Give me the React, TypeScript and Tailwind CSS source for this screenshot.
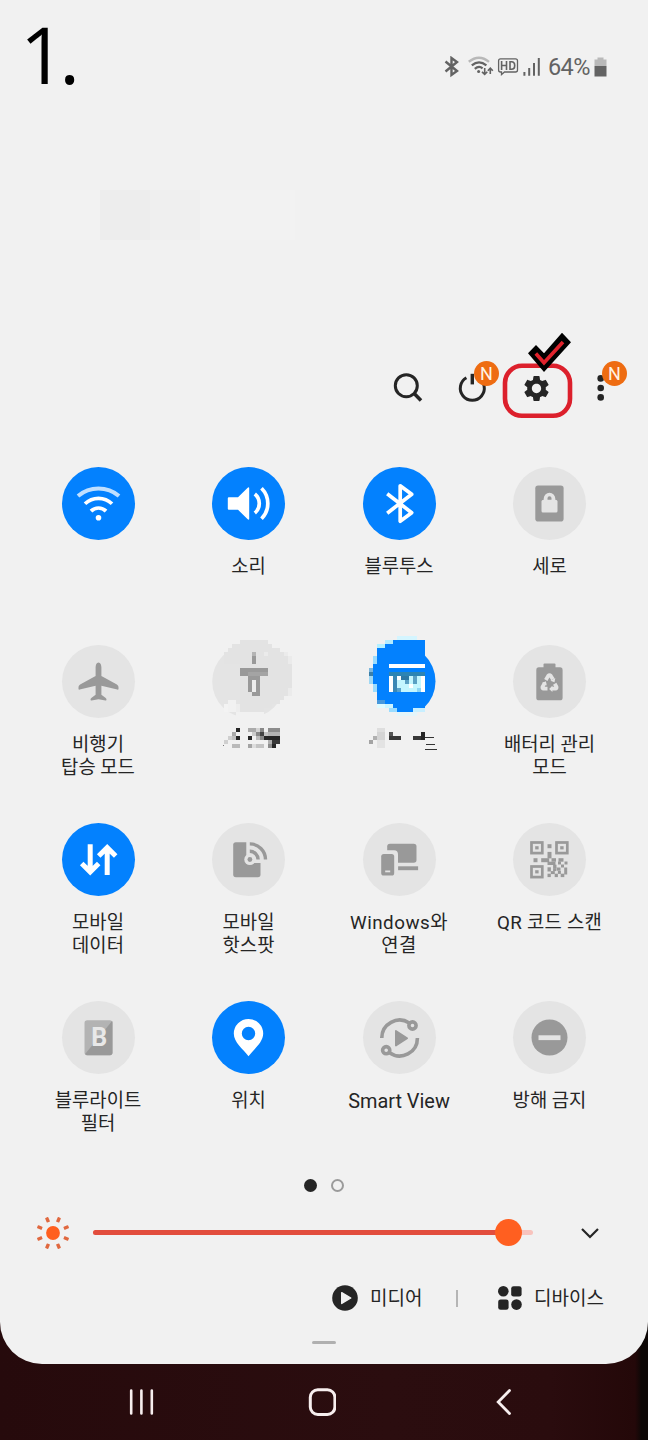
import type { ReactNode } from 'react';
import { MdSettings } from 'react-icons/md';

type Px = [x: number, y: number, w: number, h: number, fill: string];

/* Blocks of the pixelated areas */
const flashlightPixels: Px[] = [
  [240, 640, 28, 4, '#e3e3e3'],
  [232, 644, 40, 4, '#e3e3e3'],
  [228, 648, 52, 4, '#e3e3e3'],
  [224, 652, 60, 4, '#e3e3e3'],
  [224, 656, 64, 8, '#e3e3e3'],
  [240, 664, 52, 24, '#e3e3e3'],
  [240, 688, 48, 8, '#e3e3e3'],
  [240, 696, 44, 4, '#e3e3e3'],
  [240, 700, 40, 4, '#e3e3e3'],
  [240, 704, 32, 4, '#e3e3e3'],
  [240, 708, 24, 4, '#e3e3e3'],
  [228, 700, 8, 12, '#f1f1f1'],
  [224, 704, 4, 8, '#f3f3f3'],
  [236, 704, 4, 8, '#ededed'],
  [236, 712, 28, 6, '#f1f1f1'],
  [284, 652, 4, 4, '#ebebeb'],
  [288, 656, 4, 8, '#ebebeb'],
  [288, 688, 4, 8, '#ebebeb'],
  [252, 652, 4, 4, '#b4b4b4'],
  [252, 656, 4, 8, '#999999'],
  [264, 652, 4, 4, '#ebebeb'],
  [240, 668, 28, 4, '#999999'],
  [240, 672, 8, 4, '#999999'],
  [248, 672, 20, 4, '#a4a4a4'],
  [248, 676, 4, 16, '#999999'],
  [252, 676, 4, 4, '#999999'],
  [252, 680, 4, 12, '#ededed'],
  [256, 676, 4, 20, '#999999'],
  [252, 692, 4, 4, '#999999'],
  // label
  [236, 728, 4, 4, '#262626'],
  [248, 728, 8, 4, '#ababab'],
  [256, 728, 4, 4, '#d4d4d4'],
  [260, 728, 4, 4, '#888888'],
  [268, 728, 12, 4, '#8c8c8c'],
  [232, 732, 4, 4, '#aaaaaa'],
  [252, 732, 4, 4, '#cccccc'],
  [256, 732, 4, 4, '#888888'],
  [260, 732, 4, 4, '#444444'],
  [264, 732, 4, 4, '#c4c4c4'],
  [268, 732, 12, 4, '#b4b4b4'],
  [228, 736, 4, 4, '#cfcfcf'],
  [232, 736, 4, 4, '#c0c0c0'],
  [236, 736, 4, 4, '#262626'],
  [248, 736, 4, 4, '#262626'],
  [256, 736, 4, 4, '#bbbbbb'],
  [260, 736, 4, 4, '#888888'],
  [264, 736, 16, 4, '#262626'],
  [224, 740, 4, 4, '#cfcfcf'],
  [268, 740, 4, 4, '#b0b0b0'],
  [272, 740, 8, 4, '#383838'],
  [223, 745, 1, 1, '#777777'],
  [232, 744, 8, 4, '#bababa'],
  [248, 744, 4, 4, '#a4a4a4'],
  [252, 744, 4, 4, '#dddddd'],
  [256, 744, 8, 4, '#c4c4c4'],
  [268, 744, 4, 4, '#8c8c8c'],
  [272, 744, 4, 4, '#262626'],
];

const calendarPixels: Px[] = [
  [396, 636, 20, 4, '#d4f5ff'],
  [384, 640, 8, 4, '#b4ecff'],
  [392, 640, 32, 4, '#0381fe'],
  [376, 644, 8, 4, '#b4f0ff'],
  [384, 644, 40, 4, '#0381fe'],
  [376, 648, 48, 8, '#0381fe'],
  [372, 656, 4, 8, '#9adcff'],
  [376, 656, 48, 8, '#0381fe'],
  [372, 664, 52, 28, '#0381fe'],
  [368, 668, 4, 4, '#7cb6dc'],
  [368, 672, 4, 4, '#3c7fa8'],
  [368, 676, 4, 8, '#a0d8f4'],
  [372, 684, 4, 8, '#9adcff'],
  [376, 692, 48, 8, '#0381fe'],
  [376, 700, 8, 4, '#4798dc'],
  [384, 700, 40, 4, '#0381fe'],
  [376, 704, 8, 4, '#e0fbff'],
  [384, 704, 8, 4, '#cdf5ff'],
  [392, 704, 32, 4, '#0381fe'],
  [388, 708, 8, 4, '#9adcff'],
  [396, 708, 16, 4, '#0381fe'],
  [412, 708, 12, 4, '#c8efff'],
  [396, 712, 20, 4, '#e4f5fa'],
  [388, 664, 36, 4, '#ffffff'],
  [388, 672, 36, 4, '#2c84b4'],
  [388, 676, 4, 16, '#ffffff'],
  [392, 676, 4, 16, '#3a87b4'],
  [396, 676, 28, 16, '#c4f6ff'],
  [396, 676, 4, 4, '#ffffff'],
  [400, 676, 8, 4, '#2d78a4'],
  [404, 680, 4, 4, '#5aa0c4'],
  [412, 676, 4, 8, '#5aa0c4'],
  [420, 676, 4, 16, '#ffffff'],
  [396, 688, 4, 4, '#58a2cc'],
  [408, 684, 4, 4, '#ffffff'],
  [416, 688, 4, 4, '#8ed6f4'],
  // label
  [376, 728, 8, 4, '#dedede'],
  [376, 732, 8, 8, '#d4d4d4'],
  [376, 740, 8, 8, '#e3e3e3'],
  [372, 736, 4, 4, '#b0b0b0'],
  [368, 740, 4, 4, '#a4a4a4'],
  [388, 732, 4, 4, '#555555'],
  [388, 736, 12, 4, '#383838'],
  [412, 736, 8, 4, '#383838'],
  [420, 732, 4, 8, '#262626'],
  [424, 737, 9, 1, '#333333'],
  [425, 744, 9, 1, '#333333'],
  [424, 749, 12, 1, '#333333'],
];

function Pixels({ data }: { data: Px[] }) {
  return (
    <g shapeRendering="crispEdges">
      {data.map(([x, y, w, h, fill], i) => (
        <rect key={i} x={x} y={y} width={w} height={h} fill={fill} />
      ))}
    </g>
  );
}

const stroke = { fill: 'none', stroke: '#fff', strokeWidth: 3.7 };

const WifiTile = (
  <g {...stroke}>
    <path d="M-20.5 -7.5A31.8 31.8 0 0 1 20.5 -7.5" opacity=".75" strokeWidth="4" />
    <path d="M-13.5 .3A19.3 19.3 0 0 1 13.5 .3" />
    <path d="M-7.5 7.6A10.6 10.6 0 0 1 7.5 7.6" />
    <circle cy="14.2" r="2.8" fill="#fff" stroke="none" />
  </g>
);

const SoundTile = (
  <g>
    <path d="M-19.7 -6.3H-10.5L-.8 -15.8Q.7 -17 .7 -15.3V15.3Q.7 17 -.8 15.8L-10.5 6.3H-19.7Q-20.7 6.3 -20.7 5.3V-5.3Q-20.7 -6.3 -19.7 -6.3Z" fill="#fff" />
    <path d="M6.3 -9.5A12.3 12.3 0 0 1 6.3 9.5M13 -15.3A21.7 21.7 0 0 1 13 15.3" {...stroke} />
  </g>
);

const BluetoothTile = (
  <path d="M-12.3 -9.7L12.2 9.2L.7 17.7V-17.7L12.2 -9.2L-12.3 9.7" {...stroke} strokeLinejoin="round" />
);

const PortraitTile = (
  <g>
    <rect x="-14.2" y="-18" width="28.3" height="36" rx="2.8" fill="#999" />
    <path d="M-5.8 -3.7V-5A5.8 5.8 0 0 1 5.8 -5V-3.7Q8 -3.7 8 -2.2V7.5Q8 9 6.5 9H-6.5Q-8 9 -8 7.5V-2.2Q-8 -3.7 -5.8 -3.7ZM-2 -3.7H2V-5.2A2 2 0 0 0 -2 -5.2Z" fill="#e4e4e4" />
  </g>
);

const PlaneTile = (
  <path
    d="M0 -19C2 -19 2.9 -16.5 2.9 -14V-5.6L18.4 3Q20 4 20 5.6V7.3Q20 8.4 18.8 8.1L2.9 4.2V13.2L7.2 16.6Q8 17.3 8 18.3Q8 19.2 7 19L0 17.8L-7 19Q-8 19.2 -8 18.3Q-8 17.3 -7.2 16.6L-2.9 13.2V4.2L-18.8 8.1Q-20 8.4 -20 7.3V5.6Q-20 4 -18.4 3L-2.9 -5.6V-14C-2.9 -16.5 -2 -19 0 -19Z"
    fill="#999"
  />
);

const BatteryTile = (
  <g>
    <rect x="-13.2" y="-14.2" width="26.3" height="33" rx="2.6" fill="#999" />
    <rect x="-6" y="-18" width="12" height="6" rx="1" fill="#999" />
    <g fill="none" stroke="#e4e4e4" strokeWidth="3.8" strokeLinejoin="round">
      <path d="M-3.7 -1.5L-1.3 -5.6Q0 -7 1.3 -5.6L3.4 -2.2" />
      <path d="M-4.7 1.4L-7 5.4Q-7.4 7.1 -5.8 7.2H-2" />
      <path d="M2 7.2H5.8Q7.4 7.1 7 5.4L5.2 2.2" />
    </g>
    <path d="M5.8 -3.6L5 .7L.9 -.8ZM-7.6 1.6L-3.6 -.2L-2.8 4ZM2.9 4.2V10.4L-.4 7.4Z" fill="#e4e4e4" />
  </g>
);

const DataTile = (
  <g fill="none" stroke="#fff" strokeWidth="5">
    <path d="M-8.3 -15.3V12.5M-16.8 4L-8.3 12.4L.2 4" />
    <path d="M8.7 15.6V-12M.2 -3.5L8.7 -11.9L17.2 -3.5" />
  </g>
);

const HotspotTile = (
  <g>
    <rect x="-15.3" y="-17.3" width="27.3" height="35" rx="2.6" fill="#999" />
    <path d="M-2.2 -18H14V3.5H1.5L-2.2 -4Z" fill="#e4e4e4" />
    <circle cx="1.4" r="5.6" fill="#e4e4e4" />
    <circle cx="1.4" r="2.4" fill="#999" />
    <path d="M1.3 -15.6A15.6 15.6 0 0 1 17 0M1.3 -8.2A8.2 8.2 0 0 1 9.6 0" fill="none" stroke="#999" strokeWidth="3.4" />
  </g>
);

const WindowsTile = (
  <g fill="#999">
    <rect x="-12.3" y="-15.7" width="29.3" height="19" rx="2.8" />
    <path d="M-18.3 -9.3H-5.5Q-1.5 -9.3 -1.5 -5V4H-18.3Z" fill="#e4e4e4" />
    <rect x="-18.3" y="-5.5" width="13" height="21.5" rx="2.6" />
    <rect x="-14.3" y="11" width="5" height="1.8" fill="#e4e4e4" />
    <rect x="-1.4" y="6.8" width="20" height="3.9" />
  </g>
);

const qrModules = [
  [-2, -15.3, 4, 4], [-2, -7.6, 4, 6.5], [-16, -1.3, 4, 4], [-8.3, -1.3, 8, 4], [2, -1.3, 4.5, 3.5], [9, -1.3, 5, 3.5],
  [-2, 2.2, 8, 3.3], [8.5, 2, 3, 3], [11.5, 5, 3, 3], [15, 2, 3, 3], [-2, 7.8, 3.4, 4.2], [3.6, 5.2, 3.4, 3.4],
  [7, 8, 4, 3.2], [14.7, 8, 3, 7], [1.3, 11.6, 4, 3], [-2, 14.2, 3.3, 3.4], [5.2, 14.2, 3.2, 3.4], [8.4, 11.4, 3, 3],
  [11.2, 14.2, 3.6, 3.4], [3.6, 8.6, 3, 3],
];

const QrTile = (
  <g fill="#999">
    {[[-19.3, -18.3], [5.7, -18.3], [-19.3, 5.7]].map(([x, y]) => (
      <g key={`${x},${y}`}>
        <rect x={x + 1.3} y={y + 1.3} width="10.8" height="10.6" fill="none" stroke="#999" strokeWidth="2.7" />
        <rect x={x + 5} y={y + 5} width="3.4" height="3.2" />
      </g>
    ))}
    {qrModules.map(([x, y, w, h], i) => (
      <rect key={i} x={x} y={y} width={w} height={h} />
    ))}
  </g>
);

const BlueLightTile = (
  <g>
    <rect x="-14" y="-17.3" width="28" height="35" rx="2.8" fill="#b3b3b3" />
    <path d="M13.6 -16.5Q14 -16 14 -14.5V15Q14 17.7 11.2 17.7H-11.2Q-12.8 17.7 -13.4 16.6Z" fill="#999" />
    <text x=".6" y="8.7" textAnchor="middle" fill="#e8e8e8" className="font-[Roboto] text-[25px] font-bold">B</text>
  </g>
);

const PinTile = (
  <path
    d="M0 -18.6A14.7 14.7 0 0 1 14.7 -3.9C14.7 5 5.5 11.5 0 18.8C-5.5 11.5 -14.7 5 -14.7 -3.9A14.7 14.7 0 0 1 0 -18.6ZM0 -10.7A6.7 6.7 0 1 0 0 2.7A6.7 6.7 0 1 0 0 -10.7Z"
    fill="#fff"
  />
);

const SmartViewTile = (
  <g fill="none" stroke="#999" strokeWidth="3.6">
    <path d="M-17.7 .6A17.8 17.8 0 0 1 9.8 -14.5M17.9 .6A17.8 17.8 0 0 1 -10 15.3" />
    <circle cx="13" cy="-12" r="3.6" />
    <circle cx="-13.3" cy="12.7" r="3.6" />
    <path d="M-3.6 -6.6L7.6 .7L-3.6 8Z" fill="#999" strokeWidth="1.8" strokeLinejoin="round" />
  </g>
);

const DndTile = (
  <g>
    <circle r="18" fill="#999" />
    <rect x="-11" y="-2.2" width="22" height="4.8" fill="#e4e4e4" />
  </g>
);

type Tile = { label: string[]; on?: boolean; icon?: ReactNode; masked?: ReactNode; labelClass?: string };

const tiles: Tile[] = [
  { label: [], on: true, icon: WifiTile },
  { label: ['소리'], on: true, icon: SoundTile },
  { label: ['블루투스'], on: true, icon: BluetoothTile },
  { label: ['세로'], icon: PortraitTile },
  { label: ['비행기', '탑승 모드'], icon: PlaneTile },
  {
    label: [],
    masked: (
      <svg viewBox="212 645 73 73" className="size-[73px] overflow-visible">
        <circle cx="248.5" cy="681.5" r="36.3" fill="#e4e4e4" />
        <Pixels data={flashlightPixels} />
      </svg>
    ),
  },
  {
    label: [],
    masked: (
      <svg viewBox="362.5 645 73 73" className="size-[73px] overflow-visible">
        <path d="M423.5 654.6A36.5 36.5 0 0 1 423.5 707.8Z" fill="#0381fe" />
        <Pixels data={calendarPixels} />
      </svg>
    ),
  },
  { label: ['배터리 관리', '모드'], icon: BatteryTile },
  { label: ['모바일', '데이터'], on: true, icon: DataTile },
  { label: ['모바일', '핫스팟'], icon: HotspotTile },
  { label: ['Windows와', '연결'], icon: WindowsTile, labelClass: 'text-[18.8px] tracking-[0.5px]' },
  { label: ['QR 코드 스캔'], icon: QrTile, labelClass: 'text-[18.8px] tracking-[0.25px]' },
  { label: ['블루라이트', '필터'], icon: BlueLightTile },
  { label: ['위치'], on: true, icon: PinTile },
  { label: ['Smart View'], icon: SmartViewTile, labelClass: 'text-[19.9px]' },
  { label: ['방해 금지'], icon: DndTile },
];

function QuickTile({ label, on, icon, masked, labelClass = 'text-[18.8px]' }: Tile) {
  return (
    <div className="flex flex-col items-center">
      {masked ?? (
        <div className={`size-[73px] rounded-full ${on ? 'bg-[#0381fe]' : 'bg-[#e4e4e4]'}`}>
          <svg viewBox="-36.5 -36.5 73 73" className="size-full">{icon}</svg>
        </div>
      )}
      <div className={`mt-4 text-center leading-[23px] whitespace-nowrap text-[#252525] ${labelClass}`}>
        {label.map((line) => (
          <p key={line}>{line}</p>
        ))}
      </div>
    </div>
  );
}

function NewBadge() {
  return (
    <span className="absolute top-[1px] left-[33px] flex size-[25px] items-center justify-center rounded-full bg-[#ee6c12] text-[18px] text-[#fff3e4]">
      N
    </span>
  );
}

function StatusBar() {
  return (
    <div className="flex h-[22px] items-center text-[#636363]">
      <svg viewBox="443 56 103 22" className="h-[22px] w-[103px]" fill="none" stroke="#636363">
        <path d="M445.5 61.5L457 71L451.5 75V58L457 62L445.5 71.5" strokeWidth="2.4" />
        <path d="M468.8 61.8Q479 53.5 489 61.8" stroke="#b8b8b8" strokeWidth="2.4" />
        <path d="M471.8 65.3Q479 59.3 486.4 65.3M474.8 68.8Q479 65.2 482.6 68.4" strokeWidth="2.2" />
        <circle cx="478.6" cy="71.5" r="1.5" fill="#636363" stroke="none" />
        <path d="M484.7 68V74M482 71.8L484.7 74.4L487.3 71.8M490.3 74V68.6M487.8 70.8L490.3 68.2L492.8 70.8" strokeWidth="1.6" />
        <path d="M500.5 58.8H515.5Q517.5 58.8 517.5 60.8V70Q517.5 72 515.5 72H504.5L501.5 74.5V72H500.5Q498.6 72 498.6 70V60.8Q498.6 58.8 500.5 58.8Z" strokeWidth="1.3" />
        <path d="M501.6 61V70M506.5 61V70M501.6 65.5H506.5M510 61.7V69.3H511.5Q514.7 69.3 514.7 65.5Q514.7 61.7 511.5 61.7Z" strokeWidth="1.6" />
        <path d="M524.4 72V75.7M529.2 68V75.7M534 63V75.7M538.8 58V75.7" strokeWidth="2" />
      </svg>
      <span className="ml-[2px] w-[44px] text-[23.5px] tracking-[-0.6px] leading-[22px]">64%</span>
      <svg viewBox="0 0 13 20" className="ml-[2px] h-5 w-[13px]">
        <path d="M3.5 .5H9.5V2.5H12.5V9H.5V2.5H3.5Z" fill="#b9b9b9" />
        <path d="M.5 9H12.5V19.5H.5Z" fill="#636363" />
      </svg>
    </div>
  );
}

function Toolbar() {
  return (
    <div className="mt-30 flex h-14 justify-end pr-[15px]">
      <button className="h-14 w-16">
        <svg viewBox="-32 -28 64 56" fill="none" stroke="#252525" strokeWidth="3">
          <circle cx="-2.7" cy="-2.3" r="11" />
          <path d="M5.2 5.6L12 12.4" strokeWidth="3.6" />
        </svg>
      </button>
      <button className="relative h-14 w-16">
        <svg viewBox="-32 -28 64 56" fill="none" stroke="#252525" strokeWidth="3">
          <path d="M-6.6 -10.2A12 12 0 1 0 5.2 -10.2" />
          <path d="M-.7 -14.2V-3.6" strokeWidth="3.4" />
        </svg>
        <NewBadge />
      </button>
      <button className="relative flex h-14 w-16 items-center justify-center pr-[1px]">
        <MdSettings size={31} color="#252525" />
        {/* hand-drawn highlight around the gear */}
        <svg viewBox="-32 -28 64 56" className="absolute inset-0 overflow-visible">
          <rect x="-32" y="-22.2" width="65" height="50" rx="17" fill="none" stroke="#dc202c" strokeWidth="4.6" />
          <path d="M-9 -34.7L-1 -43L7 -34.7L25 -55.3L34 -45.7L7 -16Z" fill="#000" />
          <path d="M-1.2 -34.5L7 -25.3L26 -46" fill="none" stroke="#e0222c" strokeWidth="3.6" />
        </svg>
      </button>
      <button className="relative h-14 w-16">
        <svg viewBox="-32 -28 64 56" fill="#252525">
          <circle cx="-.3" cy="-9.6" r="3.3" />
          <circle cx="-.3" cy="0" r="3.3" />
          <circle cx="-.3" cy="9.4" r="3.3" />
        </svg>
        <NewBadge />
      </button>
    </div>
  );
}

function Brightness() {
  return (
    <div className="mt-[23px] flex h-9 items-center">
      <svg viewBox="-18 -18 36 36" className="ml-[35px] size-9">
        <circle r="6.9" fill="#ff5f1f" />
        {[22.5, 67.5, 112.5, 157.5, 202.5, 247.5, 292.5, 337.5].map((deg) => (
          <rect key={deg} x="-1.7" y="-16.8" width="3.4" height="5" rx=".6" fill="#e0683f" transform={`rotate(${deg})`} />
        ))}
      </svg>
      <div className="relative ml-[22px] h-[27px] w-[440px]">
        <div className="mt-[10px] h-[5px] rounded-full bg-[#f8c3bd]">
          <div className="h-[5px] w-[415px] rounded-full bg-[#e24d3d]" />
        </div>
        <div className="absolute top-[-1px] left-[402px] size-[27px] rounded-full bg-[#ff5f20]" />
      </div>
      <svg viewBox="0 0 18 12" className="ml-[48px] h-3 w-[18px]" fill="none" stroke="#252525" strokeWidth="2.2">
        <path d="M1 2L9 10L17 2" />
      </svg>
    </div>
  );
}

export default function App() {
  return (
    <div className="flex h-[1440px] w-[648px] flex-col overflow-hidden bg-[linear-gradient(90deg,#260a0c_0%,#2b0d0f_60%,#2a0c0e_85%,#240809_98%,#0d0706_99%)] font-[Roboto,'Noto_Sans_CJK_KR',sans-serif]">
      <div className="flex h-[1364px] flex-col rounded-b-[42px] bg-[#f1f1f1]">
        <div className="flex h-[190px] justify-between pr-[41px] pl-5">
          <h1 className="pt-[10px] font-['Open_Sans',sans-serif] text-[79px] leading-[88px] tracking-[-6px] text-black">1.</h1>
          <div className="pt-[56px]">
            <StatusBar />
          </div>
        </div>

        {/* blurred-out clock */}
        <div className="flex h-[50px] pl-[50px]">
          <div className="w-[50px] bg-[#f2f2f2]" />
          <div className="w-[50px] bg-[#ededed]" />
          <div className="w-[50px] bg-[#efefef]" />
          <div className="w-[95px] bg-[#f2f2f2]" />
        </div>

        <Toolbar />

        <div className="mt-[51px] ml-[22.75px] grid h-[712px] w-[602px] auto-rows-[178px] grid-cols-4">
          {tiles.map((tile, i) => (
            <QuickTile key={i} {...tile} />
          ))}
        </div>

        <div className="flex h-[13px] items-center justify-center gap-[14px] pr-[1px]">
          <span className="size-[13px] rounded-full bg-[#252525]" />
          <span className="size-[13px] rounded-full border-2 border-[#9b9b9b]" />
        </div>

        <Brightness />

        <div className="mt-8 flex h-[30px] items-center text-[19px] text-[#252525]">
          <svg viewBox="-13 -13 26 26" className="ml-[332px] size-[26px]">
            <circle r="12.8" fill="#252525" />
            <path d="M-3.3 -5.4L5.8 0L-3.3 5.4Z" fill="#f1f1f1" stroke="#f1f1f1" strokeWidth="1.4" strokeLinejoin="round" />
          </svg>
          <span className="ml-3 w-[52px] pt-[3px] whitespace-nowrap">미디어</span>
          <span className="ml-[34px] h-[17px] w-[2px] bg-[#b5b5b5]" />
          <svg viewBox="0 0 24 24" className="ml-10 size-6" fill="#252525">
            <circle cx="5.3" cy="5.3" r="5.3" />
            <rect x="13.2" y=".2" width="10.4" height="10.4" rx="2.4" />
            <rect x=".2" y="13.4" width="10.4" height="10.4" rx="2.4" />
            <circle cx="18.5" cy="18.6" r="5.3" />
          </svg>
          <span className="ml-3 pt-[3px] whitespace-nowrap">디바이스</span>
        </div>

        <div className="mt-7 ml-[312px] h-[3px] w-6 rounded-full bg-[#b0b0b0]" />
      </div>

      <nav className="flex h-[76px] items-center">
        <svg viewBox="0 0 28 28" className="ml-[127px] size-7" fill="none" stroke="#f7eeee" strokeWidth="2.6" strokeLinecap="round">
          <path d="M4.2 2.5V25.5M14.4 2.5V25.5M24.8 2.5V25.5" />
        </svg>
        <svg viewBox="0 0 28 28" className="ml-[153px] size-7" fill="none" stroke="#f7eeee" strokeWidth="3">
          <rect x="2.3" y="1.8" width="24.6" height="24.6" rx="7.5" />
        </svg>
        <svg viewBox="0 0 16 28" className="ml-[159px] h-7 w-4" fill="none" stroke="#f7eeee" strokeWidth="2.8" strokeLinecap="round">
          <path d="M14.5 2.4L3.2 14L14.5 25.6" />
        </svg>
      </nav>
    </div>
  );
}
